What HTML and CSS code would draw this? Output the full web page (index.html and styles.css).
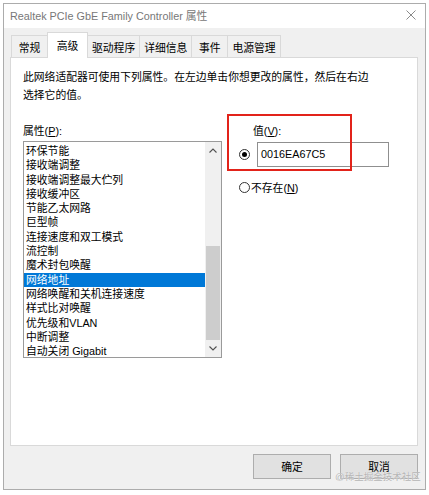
FILE: index.html
```html
<!DOCTYPE html>
<html lang="zh-CN">
<head>
<meta charset="utf-8">
<title>Realtek PCIe GbE Family Controller 属性</title>
<link rel="stylesheet" href="styles.css">
</head>
<body>
<div class="window">
  <div class="titlebar">
    <span class="title">Realtek PCIe GbE Family Controller 属性</span>
    <svg class="close" width="10" height="10" viewBox="0 0 10 10"><path d="M0.5 0.5L9.5 9.5M9.5 0.5L0.5 9.5" stroke="#8a8a8a" stroke-width="1" fill="none"/></svg>
  </div>
  <div class="content">
    <div class="tabs">
      <div class="tab">常规</div>
      <div class="tab active">高级</div>
      <div class="tab">驱动程序</div>
      <div class="tab">详细信息</div>
      <div class="tab">事件</div>
      <div class="tab">电源管理</div>
    </div>
    <div class="panel">
      <p class="desc">此网络适配器可使用下列属性。在左边单击你想更改的属性，然后在右边<br>选择它的值。</p>
      <div class="cols">
        <div class="left">
          <div class="label">属性(<u>P</u>):</div>
          <div class="listbox">
            <ul class="items">
              <li>环保节能</li>
              <li>接收端调整</li>
              <li>接收端调整最大伫列</li>
              <li>接收缓冲区</li>
              <li>节能乙太网路</li>
              <li>巨型帧</li>
              <li>连接速度和双工模式</li>
              <li>流控制</li>
              <li>魔术封包唤醒</li>
              <li class="selected">网络地址</li>
              <li>网络唤醒和关机连接速度</li>
              <li>样式比对唤醒</li>
              <li>优先级和VLAN</li>
              <li>中断调整</li>
              <li>自动关闭 Gigabit</li>
            </ul>
            <div class="scrollbar">
              <div class="sb-btn"><svg width="8" height="5" viewBox="0 0 8 5"><path d="M0.5 4.5L4 1L7.5 4.5" stroke="#505050" stroke-width="1.1" fill="none"/></svg></div>
              <div class="sb-track"><div class="sb-thumb"></div></div>
              <div class="sb-btn"><svg width="8" height="5" viewBox="0 0 8 5"><path d="M0.5 0.5L4 4L7.5 0.5" stroke="#505050" stroke-width="1.1" fill="none"/></svg></div>
            </div>
          </div>
        </div>
        <div class="right">
          <div class="vlabel">值(<u>V</u>):</div>
          <div class="vrow">
            <span class="radio checked"></span>
            <div class="input">0016EA67C5</div>
          </div>
          <div class="nrow">
            <span class="radio"></span>
            <span>不存在(<u>N</u>)</span>
          </div>
          <div class="annot"></div>
        </div>
      </div>
    </div>
    <div class="buttons">
      <button class="btn">确定</button>
      <button class="btn">取消</button>
    </div>
  </div>
  <div class="watermark">@稀土掘金技术社区</div>
</div>
</body>
</html>
```
FILE: styles.css
```css
* { box-sizing: border-box; }
body {
  margin: 0;
  background: #fff;
  font-family: "Liberation Sans", "Noto Sans CJK SC", sans-serif;
  font-size: 10.8px;
  color: #000;
}
.window {
  position: relative;
  margin: 3px 0 0 3px;
  width: 423px;
  height: 487px;
  border: 1px solid #acacac;
  background: #f0f0f0;
  display: flex;
  flex-direction: column;
}
.titlebar {
  height: 24px;
  background: #fff;
  display: flex;
  align-items: center;
  justify-content: space-between;
  padding: 0 9px 2px 6px;
}
.title { color: #777; }
.close { display: block; }
.content {
  flex: 1;
  display: flex;
  flex-direction: column;
  padding: 4px 7px 0 6px;
}
.tabs {
  display: flex;
  align-items: flex-end;
  height: 25px;
  padding-left: 1px;
  position: relative;
  z-index: 1;
}
.tab {
  height: 22px;
  min-width: 37px;
  padding: 0 4px;
  border: 1px solid #d9d9d9;
  border-bottom: none;
  margin-left: -1px;
  background: #f0f0f0;
  display: flex;
  align-items: center;
  justify-content: center;
  white-space: nowrap;
}
.tab:first-child { margin-left: 0; }
.tab.active {
  height: 26px;
  min-width: 41px;
  margin-bottom: -1px;
  padding-bottom: 2px;
  background: #fff;
}
.panel {
  height: 389px;
  background: #fff;
  border: 1px solid #d9d9d9;
  padding: 10px 12px 0 12px;
}
.desc {
  margin: 0;
  line-height: 18px;
}
.cols {
  display: flex;
  margin-top: 18px;
}
.left { width: 199px; flex: none; }
.label {
  height: 18px;
  line-height: 18px;
  margin-bottom: 1px;
}
.listbox {
  height: 217px;
  border: 1px solid #9a9a9a;
  background: #fff;
  display: flex;
}
.items {
  flex: 1;
  list-style: none;
  margin: 0;
  padding: 2px 0 0 0;
}
.items li {
  height: 14.3px;
  line-height: 14.3px;
  padding-left: 2px;
  white-space: nowrap;
}
.items li.selected {
  background: #0078d7;
  color: #fff;
}
.scrollbar {
  width: 16px;
  background: #f0f0f0;
  display: flex;
  flex-direction: column;
}
.sb-btn {
  height: 17px;
  display: flex;
  align-items: center;
  justify-content: center;
}
.sb-btn svg { display: block; }
.sb-track {
  flex: 1;
  display: flex;
  flex-direction: column;
  justify-content: flex-end;
  padding: 0 1px;
}
.sb-thumb {
  height: 94px;
  background: #cdcdcd;
}
.right {
  position: relative;
  margin-left: 17px;
  flex: 1;
}
.vlabel {
  height: 18px;
  line-height: 18px;
  padding-left: 14px;
}
.vrow {
  display: flex;
  align-items: center;
  gap: 7px;
  height: 25px;
  margin-top: 2px;
}
.radio {
  flex: none;
  width: 11px;
  height: 11px;
  border: 1px solid #333;
  border-radius: 50%;
  background: #fff;
  display: flex;
  align-items: center;
  justify-content: center;
}
.radio.checked::after {
  content: "";
  width: 5px;
  height: 5px;
  border-radius: 50%;
  background: #000;
}
.input {
  width: 132px;
  height: 25px;
  border: 1px solid #8f8f8f;
  background: #fff;
  padding-left: 3px;
  line-height: 23px;
}
.nrow {
  display: flex;
  align-items: center;
  gap: 1px;
  height: 18px;
  margin-top: 11px;
}
.annot {
  position: absolute;
  left: -12px;
  top: -8px;
  width: 125px;
  height: 57px;
  border: 2px solid #e2231a;
}
.buttons {
  display: flex;
  justify-content: flex-end;
  gap: 9px;
  margin-top: 8px;
}
.btn {
  width: 78px;
  height: 25px;
  border: 1px solid #adadad;
  background: #e1e1e1;
  font: inherit;
  line-height: 12px;
  color: #000;
  padding: 0;
}
.watermark {
  position: absolute;
  left: 331px;
  top: 468px;
  font-size: 9.5px;
  line-height: 9px;
  color: #b4b4b4;
  text-shadow: 0 0 1px #fff;
  white-space: nowrap;
}
```
